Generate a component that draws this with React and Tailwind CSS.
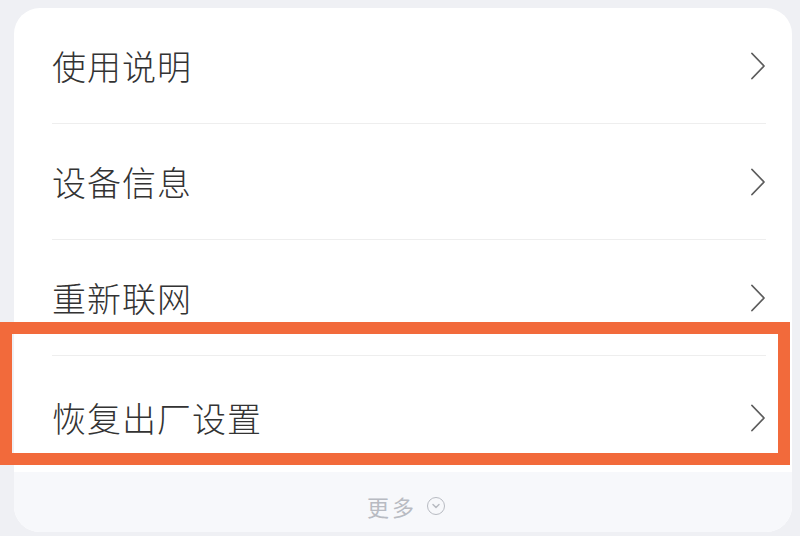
import { ChevronDown } from 'lucide-react';

const items = ['使用说明', '设备信息', '重新联网', '恢复出厂设置'];

function Chevron() {
  return (
    <svg width="16" height="28" viewBox="0 0 16 28" fill="none" className="text-[#5c5c5c]">
      <path d="M2 1.5 L14 14 L2 26.5" stroke="currentColor" strokeWidth="1.8" strokeLinecap="round" strokeLinejoin="round" />
    </svg>
  );
}

export default function App() {
  return (
    <div
      className="w-[800px] h-[536px] bg-[#eff0f4] pt-[8px] pl-[14px] pr-[8px] overflow-hidden relative"
      style={{ fontFamily: '"Noto Sans CJK SC", "Noto Sans", sans-serif' }}
    >
      <div className="bg-white rounded-[26px] overflow-hidden h-[524px] flex flex-col">
        <div className="pl-[38px] pr-[26px]">
          {items.map((label, i) => (
            <div
              key={label}
              className={`flex items-center justify-between h-[116px] ${
                i < items.length - 1 ? 'border-b border-[#eeeeee]' : 'pt-[8px]'
              }`}
            >
              <span className="text-[34px] leading-none font-light text-[#333333] tracking-[1px]">{label}</span>
              <Chevron />
            </div>
          ))}
        </div>
        <div className="flex-1 bg-[#f7f8fb] flex items-center justify-center gap-[10px] pt-[8px] pl-[6px]">
          <span className="text-[22px] leading-none text-[#b8bbc2] tracking-[3px]">更多</span>
          <span className="w-[18px] h-[18px] rounded-full border-[1.5px] border-[#b8bbc2] flex items-center justify-center text-[#b8bbc2]">
            <ChevronDown size={12} strokeWidth={3} />
          </span>
        </div>
      </div>
      {/* highlight annotation */}
      <div className="absolute left-0 top-[322px] w-[790px] h-[143px] border-[12px] border-[#f26a3b]" />
    </div>
  );
}
